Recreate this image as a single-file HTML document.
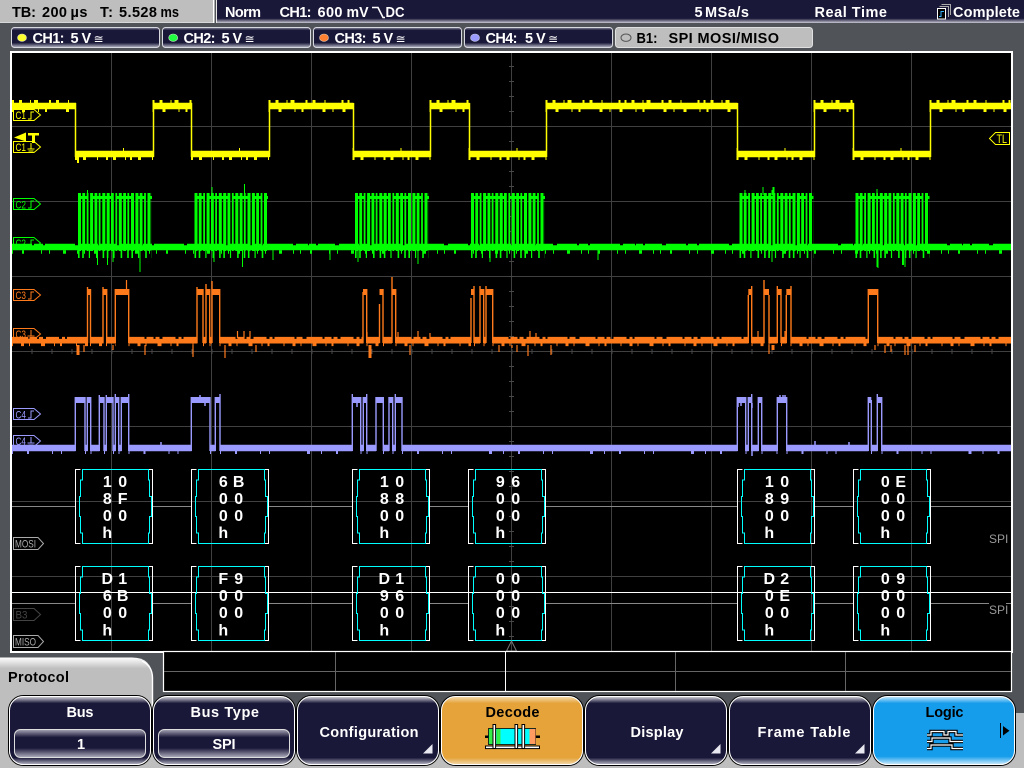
<!DOCTYPE html>
<html lang="en">
<head>
<meta charset="utf-8">
<title>Oscilloscope SPI Decode</title>
<style>
html,body{margin:0;padding:0;background:#505458;width:1024px;height:768px;overflow:hidden}
svg{display:block}
text{font-family:"Liberation Sans",sans-serif;font-weight:bold;font-size:14.5px}
.l{font-weight:normal;font-size:11px}
.d{font-size:16px;fill:#fff;text-anchor:middle}
.w{fill:#fff}
.k{fill:#000}
.s{font-family:"DejaVu Sans",sans-serif;font-weight:normal;font-size:12px;fill:#fff}
</style>
</head>
<body>
<svg width="1024" height="768" viewBox="0 0 1024 768" xmlns="http://www.w3.org/2000/svg">
<defs>
<linearGradient id="bar" x1="0" y1="0" x2="0" y2="1"><stop offset="0" stop-color="#1a1838"/><stop offset=".8" stop-color="#1a1838"/><stop offset="1" stop-color="#c8c8d4"/></linearGradient>
<linearGradient id="pill" x1="0" y1="0" x2="0" y2="1"><stop offset="0" stop-color="#8c8ca0"/><stop offset=".14" stop-color="#1a1838"/><stop offset=".76" stop-color="#1a1838"/><stop offset="1" stop-color="#b8b8c8"/></linearGradient>
<linearGradient id="btn" x1="0" y1="0" x2="0" y2="1"><stop offset="0" stop-color="#d8d8e0"/><stop offset=".1" stop-color="#1a1838"/><stop offset=".9" stop-color="#1a1838"/><stop offset="1" stop-color="#b8b8c8"/></linearGradient>
<linearGradient id="inner" x1="0" y1="0" x2="0" y2="1"><stop offset="0" stop-color="#a8a8b8"/><stop offset=".28" stop-color="#1a1838"/><stop offset=".66" stop-color="#1a1838"/><stop offset="1" stop-color="#b0b0c0"/></linearGradient>
<linearGradient id="org" x1="0" y1="0" x2="0" y2="1"><stop offset="0" stop-color="#f4dcb0"/><stop offset=".1" stop-color="#e5a33a"/><stop offset=".9" stop-color="#e5a33a"/><stop offset="1" stop-color="#f2d8a8"/></linearGradient>
<linearGradient id="blu" x1="0" y1="0" x2="0" y2="1"><stop offset="0" stop-color="#c8e8fb"/><stop offset=".1" stop-color="#159ceb"/><stop offset=".88" stop-color="#159ceb"/><stop offset="1" stop-color="#d0ecfb"/></linearGradient>
<linearGradient id="tab" x1="0" y1="0" x2="0" y2="1"><stop offset="0" stop-color="#fff"/><stop offset=".1" stop-color="#bebebe"/><stop offset="1" stop-color="#bebebe"/></linearGradient>
<g id="box">
<path d="M5.5 .5H.5V74.5H5.5M72.5 .5H77.5V74.5H72.5" fill="none" stroke="#fff" stroke-width="1"/>
<path d="M7.5 .5H73.5V11H74.5V27.5H76.5V47.5H74.5V64H73.5V74.5H7.5V64H5.5V47.5H4.5V27.5H5.5V11H7.5Z" fill="none" stroke="#00ffff" stroke-width="1"/>
</g>
<path id="yh" d="M12 106H76M152.5 106H192M268.5 106H353.5M429.5 106H469.5M545.5 106H737.5M813.5 106H853.5M929.5 106H1011"/>
<path id="yl" d="M75 154H153.5M191 154H269.5M352.5 154H430.5M468.5 154H546.5M736.5 154H814.5M852.5 154H930.5"/>
<path id="gb" d="M78 222H152M194.5 222H268M355 222H429M471 222H545M739.5 222H813.5M855.5 222H929.5"/>
<path id="ob" d="M12 341H88M90 341H103.5M106 341H115.5M128.5 341H197.5M203 341H206M209.5 341H212M219.5 341H363.5M366.5 341H379.5M383 341H392M395.5 341H471M474 341H480M483.5 341H486M492.5 341H748.5M751.5 341H764.5M768.5 341H777.5M781 341H786.5M790.5 341H868.5M877.5 341H1011"/>
<path id="bb" d="M12 448H75.5M85 448H87.5M90.5 448H99.5M104 448H106.5M113 448H115.5M118.5 448H121.5M128.5 448H191.5M210 448H215.5M220 448H352.5M360.5 448H363.5M366.5 448H376M383 448H389M392.5 448H395.5M402 448H737.5M745.5 448H748.5M751.5 448H758.5M761.5 448H777.5M786.5 448H868.5M871 448H877.5M881.5 448H1011"/>
</defs>

<rect width="1024" height="768" fill="#505458"/>

<!-- top bar -->
<rect x="0" y="0" width="213" height="22" fill="#bebebe"/>
<rect x="0" y="22" width="213" height="1" fill="#d8d8d8"/>
<rect x="213" y="0" width="1.5" height="23" fill="#fff"/>
<rect x="217" y="0" width="807" height="23" fill="url(#bar)"/>
<rect x="216" y="0" width="1" height="23" fill="#e8e8e8"/>
<text x="12" y="17" class="k" textLength="24">TB:</text><text x="42" y="17" class="k" textLength="25">200</text><text x="70.5" y="17" class="k" textLength="17">µs</text>
<text x="100" y="17" class="k" textLength="13">T:</text><text x="119" y="17" class="k" textLength="38">5.528</text><text x="160.5" y="17" class="k" textLength="18.5" lengthAdjust="spacingAndGlyphs">ms</text>
<text x="225" y="17" class="w" textLength="36">Norm</text>
<text x="279.5" y="17" class="w" textLength="32">CH1:</text>
<text x="317.5" y="17" class="w" textLength="25">600</text>
<text x="346.5" y="17" class="w" textLength="22" lengthAdjust="spacingAndGlyphs">mV</text>
<path d="M372 7.5H378L383 17.5H385" fill="none" stroke="#fff" stroke-width="1.6"/>
<text x="385.5" y="17" class="w" textLength="19" lengthAdjust="spacingAndGlyphs">DC</text>
<text x="694.5" y="17" class="w">5</text>
<text x="705" y="17" class="w" textLength="44">MSa/s</text>
<text x="814.5" y="17" class="w" textLength="72.5">Real Time</text>
<text x="953" y="17" class="w" textLength="67">Complete</text>
<path d="M941.5 4.5H950.5V15M939.5 6.5H948.5V17" fill="none" stroke="#aaa" stroke-width="1"/>
<rect x="937.5" y="8.5" width="8" height="10.5" fill="#000" stroke="#fff"/>
<path d="M939 16.5H941V11.5H944" fill="none" stroke="#35b0ff" stroke-width="1"/>

<!-- channel pills -->
<g stroke="#d8d8e0" stroke-width="1" fill="url(#pill)">
<rect x="11.5" y="27.5" width="148" height="20" rx="3"/>
<rect x="162.5" y="27.5" width="148" height="20" rx="3"/>
<rect x="313.5" y="27.5" width="148" height="20" rx="3"/>
<rect x="464.5" y="27.5" width="148" height="20" rx="3"/>
</g>
<rect x="615.5" y="27.5" width="197" height="20" rx="3" fill="#bebebe" stroke="#e0e0e0"/>
<ellipse cx="22" cy="37.7" rx="4.5" ry="3.7" fill="#ffff30" stroke="#d8d8c0" stroke-width=".6"/>
<ellipse cx="173.2" cy="37.7" rx="4.5" ry="3.7" fill="#20ff40" stroke="#c8e0c8" stroke-width=".6"/>
<ellipse cx="324" cy="37.7" rx="4.5" ry="3.7" fill="#ff8030" stroke="#e0c8b8" stroke-width=".6"/>
<ellipse cx="475" cy="37.7" rx="4.5" ry="3.7" fill="#9a9aff" stroke="#c8c8e0" stroke-width=".6"/>
<ellipse cx="626" cy="37.7" rx="5" ry="3.7" fill="#bebebe" stroke="#555" stroke-width="1"/>
<text x="32.5" y="43" class="w" textLength="32">CH1:</text><text x="70.5" y="43" class="w">5</text><text x="81.5" y="43" class="w">V</text>
<text x="183.5" y="43" class="w" textLength="32">CH2:</text><text x="221.5" y="43" class="w">5</text><text x="232.5" y="43" class="w">V</text>
<text x="334.5" y="43" class="w" textLength="32">CH3:</text><text x="372.5" y="43" class="w">5</text><text x="383.5" y="43" class="w">V</text>
<text x="485.5" y="43" class="w" textLength="32">CH4:</text><text x="525" y="43" class="w">5</text><text x="536" y="43" class="w">V</text>
<text x="93.5" y="43" class="s">≅</text>
<text x="244.5" y="43" class="s">≅</text>
<text x="395.5" y="43" class="s">≅</text>
<text x="548" y="43" class="s">≅</text>
<text x="636.5" y="43" class="k" textLength="21" lengthAdjust="spacingAndGlyphs">B1:</text>
<text x="668.5" y="43" class="k" textLength="110.5">SPI MOSI/MISO</text>

<!-- scope screen -->
<rect x="11" y="52" width="1001" height="600" fill="#000" stroke="#fff" stroke-width="2"/>
<g stroke="#404040" stroke-width="1" fill="none">
<path d="M111.5 53V651M211.5 53V651M311.5 53V651M411.5 53V651M511.5 53V651M611.5 53V651M711.5 53V651M811.5 53V651M911.5 53V651"/>
<path d="M12 126.5H1011M12 201.5H1011M12 276.5H1011M12 351.5H1011M12 426.5H1011M12 501.5H1011M12 576.5H1011"/>
<line x1="31.5" y1="351.5" x2="1011" y2="351.5" stroke-width="5" stroke-dasharray="1 19" stroke="#484848"/>
<line x1="511.5" y1="66" x2="511.5" y2="651" stroke-width="5" stroke-dasharray="1 14" stroke="#484848"/>
</g>

<!-- channel tags -->
<g fill="none" stroke-width="1">
<g stroke="#ffff00">
<path d="M13.5 109.5H34L40.5 115L34 120.5H13.5Z"/><path d="M28 119H31V112H34"/>
<path d="M13.5 141.5H34L40.5 147L34 152.5H13.5Z"/><path d="M31 143V149M27.5 149H34.5M28.5 151H33.5"/>
</g>
<g stroke="#00ff00">
<path d="M13.5 198.5H34L40.5 204L34 209.5H13.5Z"/><path d="M28 208H31V201H34"/>
<path d="M13.5 237.5H34L40.5 243L34 248.5H13.5Z"/><path d="M28 247H31V240H34"/>
</g>
<g stroke="#ff7a1a">
<path d="M13.5 289.5H34L40.5 295L34 300.5H13.5Z"/><path d="M28 299H31V292H34"/>
<path d="M13.5 328.5H34L40.5 334L34 339.5H13.5Z"/><path d="M31 330V336M27.5 336H34.5M28.5 338H33.5"/>
</g>
<g stroke="#9a9aff">
<path d="M13.5 408.5H34L40.5 414L34 419.5H13.5Z"/><path d="M28 418H31V411H34"/>
<path d="M13.5 435.5H34L40.5 441L34 446.5H13.5Z"/><path d="M31 437V443M27.5 443H34.5M28.5 445H33.5"/>
</g>
<path d="M13.5 537.5H38L43.5 543.5L38 549.5H13.5Z" stroke="#aaa"/>
<path d="M13.5 608.5H34L40.5 614.5L34 620.5H13.5Z" stroke="#444"/>
<path d="M13.5 635.5H38L43.5 641.5L38 647.5H13.5Z" stroke="#aaa"/>
<path d="M989.5 138.5L995.5 132.5H1009.5V144.5H995.5Z" stroke="#ffff00"/>
</g>
<text class="l" x="15.5" y="119" fill="#ffff00" textLength="10.5" lengthAdjust="spacingAndGlyphs">C1</text>
<text class="l" x="15.5" y="151" fill="#ffff00" textLength="10.5" lengthAdjust="spacingAndGlyphs">C1</text>
<text class="l" x="15.5" y="208.5" fill="#00ff00" textLength="10.5" lengthAdjust="spacingAndGlyphs">C2</text>
<text class="l" x="15.5" y="247" fill="#00ff00" textLength="10.5" lengthAdjust="spacingAndGlyphs">C2</text>
<text class="l" x="15.5" y="299" fill="#ff7a1a" textLength="10.5" lengthAdjust="spacingAndGlyphs">C3</text>
<text class="l" x="15.5" y="338" fill="#ff7a1a" textLength="10.5" lengthAdjust="spacingAndGlyphs">C3</text>
<text class="l" x="15.5" y="418.5" fill="#9a9aff" textLength="10.5" lengthAdjust="spacingAndGlyphs">C4</text>
<text class="l" x="15.5" y="445" fill="#9a9aff" textLength="10.5" lengthAdjust="spacingAndGlyphs">C4</text>
<text class="l" x="15" y="547.5" fill="#aaa" textLength="21" lengthAdjust="spacingAndGlyphs">MOSI</text>
<text class="l" x="15.5" y="618.5" fill="#444" textLength="12" lengthAdjust="spacingAndGlyphs">B3</text>
<text class="l" x="15" y="645.5" fill="#aaa" textLength="21" lengthAdjust="spacingAndGlyphs">MISO</text>
<text class="l" x="996.5" y="143" fill="#ffff00" style="font-size:12px" textLength="10.5" lengthAdjust="spacingAndGlyphs">TL</text>
<text class="l" x="989" y="543" fill="#999" style="font-size:12px">SPI</text>
<text class="l" x="989" y="614" fill="#999" style="font-size:12px">SPI</text>

<!-- yellow -->
<g fill="none" stroke="#ffff00">
<use href="#yh" stroke-width="6.6"/><use href="#yl" stroke-width="6.6"/>
<path stroke-width="1.5" d="M75.5 103V157M153.5 103V157M191.5 103V157M269.5 103V157M353.5 103V157M430.5 103V157M469.5 103V157M546.5 103V157M737.5 103V157M814.5 103V157M853.5 103V157M930.5 103V157"/>
<use href="#yh" transform="translate(0,-4.5)" stroke-width="3" stroke-dasharray="2 5 3 8 1 3 4 11 2 5 3 9 1 16 2 4"/>
<use href="#yh" transform="translate(0,4.5)" stroke-width="3" stroke-dasharray="1 9 3 13 1 6 2 19 3 7"/>
<use href="#yl" transform="translate(0,4.5)" stroke-width="3" stroke-dasharray="2 6 3 11 1 8 2 5 3 9 1 4"/>
<use href="#yl" transform="translate(0,-4.5)" stroke-width="3" stroke-dasharray="1 47 1 61 2 39"/>
<path stroke-width="2" d="M78 157V163"/>
</g>

<!-- green -->
<g fill="none" stroke="#00ff00">
<line x1="12" y1="247.7" x2="1011" y2="247.7" stroke-width="5"/>
<line x1="12" y1="245" x2="1011" y2="245" stroke-width="2.5" stroke-dasharray="20 2 9 2 30 3 12 1 7 2 17 4"/>
<line x1="12" y1="252" x2="1011" y2="252" stroke-width="3.5" stroke-dasharray="1 9 2 17 1 7 1 13 3 11 1 6"/>
<use href="#gb" stroke-width="58" stroke-dasharray="3 1.3 2.8 1.6 1.8 1.6 3 1.4 2.8 1.4 1.8 1.8 3 1.4"/>
<use href="#gb" transform="translate(0,-24.5)" stroke-width="3" stroke-dasharray="9 4 20 6 14 5"/>
<use href="#gb" transform="translate(0,32)" stroke-width="8" stroke-dasharray="1.6 2.6 1.6 5 1.2 6 1.6 5"/>
<path stroke-width="1" d="M87.5 190V200M212 187V195M244.5 184V193M745 190V195M763 187V195M877 189V195M97.5 250V265M107.5 250V265M140 250V272M113 250V262M214 250V262M242.5 250V267M273 250V260M330 250V260M358 250V262M418 250V264M490 250V262M598 250V260M772 250V262M772 190V195M905 250V267M877 250V267M878 250V268"/>
<path stroke-width="2" d="M773.5 187V195M903 250V265"/>
</g>

<!-- orange -->
<g fill="none" stroke="#ff7a1a">
<use href="#ob" stroke-width="4.6" transform="translate(0,.2)"/>
<use href="#ob" transform="translate(0,-2.8)" stroke-width="2.6" stroke-dasharray="16 2 7 2 4 3 13 3 3 2 20 2 6 4"/>
<use href="#ob" transform="translate(0,3.6)" stroke-width="3" stroke-dasharray="1 8 3 5 1 11 4 9 1 5 2 14"/>
<path stroke-width="6" d="M87.5 292H90.5M103 292H106.7M115.3 292H128.7M197 292H203M206 292H209.7M212 292H219.7M363 292H366.7M379.5 292H383M392 292H395.7M471 292H474M480 292H483.7M486 292H492.7M748.3 292H751.7M764 292H769M777.3 292H781M786.3 292H791M868.3 292H877.7"/>
<path stroke-width="1.4" d="M87.5 287V343M90.5 289V343M103 287V343M106.7 289V343M115.3 289V343M128.7 289V343M197 287V343M203 289V343M206 284V343M209.7 289V343M212 281V343M219.7 289V343M363 292V343M366.7 289V343M379.5 304V343M383 289V343M392 277V343M395.7 289V343M471 298V343M474 286V343M480 286V343M483.7 289V343M486 286V343M492.7 289V343M748.3 295V343M751.7 286V343M764 280V343M769 295V343M777.3 286V343M781 289V343M786.3 295V343M791 286V343M868.3 289V343M877.7 289V343"/>
<path stroke-width="1.2" d="M126.5 280V290M237.5 331V338M244 331V338M250 331V338M225 345V358M84 345V352M145 345V355M113 345V350M193 345V357M256 345V352M769 345V354M410 345V355M367 332V339M398 332V339M370 345V356M418 331V339M430 333V339M499 345V352M512 345V348M517 345V352M528 345V356M530 331V338M536 333V339M551 345V355M758 331V339M785 331V339M875 345V350M915 345V352M885 345V353M891 345V352M905 345V355M908 345V355"/>
<path stroke-width="3" d="M78 345V355M370 345V358M773 345V350"/>
</g>

<!-- blue -->
<g fill="none" stroke="#9a9aff">
<use href="#bb" stroke-width="6.4"/>
<use href="#bb" transform="translate(0,4.5)" stroke-width="3" stroke-dasharray="1 14 2 23 1 8 1 37 3 11"/>
<path stroke-width="6" d="M75.3 400H85M87.3 400H90.7M99.3 400H104M106.3 400H113M115.3 400H118.7M121.3 400H128.7M191.3 400H210M215.3 400H220M352.3 400H360.7M363.3 400H366.7M376 400H383.3M389 400H392.7M395.3 400H402M737.3 400H745.7M748.3 400H751.7M758.3 400H761.7M777.3 400H786.7M868.3 400H871.3M877.3 400H881.7"/>
<path stroke-width="1.4" d="M75.3 397V451M85 397V451M87.3 397V451M90.7 397V451M99.3 395V451M104 397V451M106.3 395V451M113 397V451M115.3 394V451M118.7 397V451M121.3 397V451M128.7 394V451M191.3 397V451M210 397V451M215.3 397V451M220 394V451M352.3 394V451M360.7 397V451M363.3 397V451M366.7 394V451M376 397V451M383.3 397V451M389 397V451M392.7 397V451M395.3 394V451M402 397V451M737.3 397V451M745.7 397V451M748.3 397V451M751.7 394V451M758.3 397V451M761.7 397V451M777.3 397V451M786.7 397V451M868.3 397V451M871.3 400V451M877.3 394V451M881.7 397V451"/>
<path stroke-width="1.5" d="M200 395V397M205 403V406M357 403V407M785 395V397M780 395V397M783 395V397M738 403V407M741 403V406M752 451V456M752 403V408M161 442V445M815 441V445M849 442V445"/>
</g>

<!-- bus lines -->
<g stroke="#888" stroke-width="1" fill="none">
<path d="M12 506.5H75M153 506.5H191M269 506.5H352M430 506.5H468M546 506.5H737M815 506.5H853M931 506.5H1011"/>
<path d="M12 603.5H75M153 603.5H191M269 603.5H352M430 603.5H468M546 603.5H737M815 603.5H853M931 603.5H989M1006 603.5H1011"/>
</g>
<line x1="12" y1="592.5" x2="1011" y2="592.5" stroke="#fff" stroke-width="1"/>

<!-- decode boxes -->
<use href="#box" x="75" y="469"/><use href="#box" x="191" y="469"/><use href="#box" x="352" y="469"/><use href="#box" x="468" y="469"/><use href="#box" x="737" y="469"/><use href="#box" x="853" y="469"/>
<use href="#box" x="75" y="566"/><use href="#box" x="191" y="566"/><use href="#box" x="352" y="566"/><use href="#box" x="468" y="566"/><use href="#box" x="737" y="566"/><use href="#box" x="853" y="566"/>

<g transform="translate(75,0)"><text class="d" x="32.3 40 47.7" y="487">1 0</text><text class="d" x="32.3 40 47.7" y="504">8 F</text><text class="d" x="32.3 40 47.7" y="521">0 0</text><text class="d" x="32.3" y="538">h</text>
<text class="d" x="32.3 40 47.7" y="584">D 1</text><text class="d" x="32.3 40 47.7" y="601">6 B</text><text class="d" x="32.3 40 47.7" y="618">0 0</text><text class="d" x="32.3" y="635.5">h</text></g>
<g transform="translate(191,0)"><text class="d" x="32.3 40 47.7" y="487">6 B</text><text class="d" x="32.3 40 47.7" y="504">0 0</text><text class="d" x="32.3 40 47.7" y="521">0 0</text><text class="d" x="32.3" y="538">h</text>
<text class="d" x="32.3 40 47.7" y="584">F 9</text><text class="d" x="32.3 40 47.7" y="601">0 0</text><text class="d" x="32.3 40 47.7" y="618">0 0</text><text class="d" x="32.3" y="635.5">h</text></g>
<g transform="translate(352,0)"><text class="d" x="32.3 40 47.7" y="487">1 0</text><text class="d" x="32.3 40 47.7" y="504">8 8</text><text class="d" x="32.3 40 47.7" y="521">0 0</text><text class="d" x="32.3" y="538">h</text>
<text class="d" x="32.3 40 47.7" y="584">D 1</text><text class="d" x="32.3 40 47.7" y="601">9 6</text><text class="d" x="32.3 40 47.7" y="618">0 0</text><text class="d" x="32.3" y="635.5">h</text></g>
<g transform="translate(468,0)"><text class="d" x="32.3 40 47.7" y="487">9 6</text><text class="d" x="32.3 40 47.7" y="504">0 0</text><text class="d" x="32.3 40 47.7" y="521">0 0</text><text class="d" x="32.3" y="538">h</text>
<text class="d" x="32.3 40 47.7" y="584">0 0</text><text class="d" x="32.3 40 47.7" y="601">0 0</text><text class="d" x="32.3 40 47.7" y="618">0 0</text><text class="d" x="32.3" y="635.5">h</text></g>
<g transform="translate(737,0)"><text class="d" x="32.3 40 47.7" y="487">1 0</text><text class="d" x="32.3 40 47.7" y="504">8 9</text><text class="d" x="32.3 40 47.7" y="521">0 0</text><text class="d" x="32.3" y="538">h</text>
<text class="d" x="32.3 40 47.7" y="584">D 2</text><text class="d" x="32.3 40 47.7" y="601">0 E</text><text class="d" x="32.3 40 47.7" y="618">0 0</text><text class="d" x="32.3" y="635.5">h</text></g>
<g transform="translate(853,0)"><text class="d" x="32.3 40 47.7" y="487">0 E</text><text class="d" x="32.3 40 47.7" y="504">0 0</text><text class="d" x="32.3 40 47.7" y="521">0 0</text><text class="d" x="32.3" y="538">h</text>
<text class="d" x="32.3 40 47.7" y="584">0 9</text><text class="d" x="32.3 40 47.7" y="601">0 0</text><text class="d" x="32.3 40 47.7" y="618">0 0</text><text class="d" x="32.3" y="635.5">h</text></g>

<!-- trigger marker -->
<path d="M14 137.5L26 132.5V141.5Z" fill="#ffff00"/>
<path d="M28 133H39V135.5H35V143H32V135.5H28Z" fill="#ffff00"/>
<path d="M506.5 651L511.5 641L516.5 651Z" fill="none" stroke="#777"/>

<!-- timeline -->
<rect x="163.5" y="651.5" width="848" height="40" fill="#000" stroke="#fff" stroke-width="1.2"/>
<path d="M164 671.5H1011M335.5 652V691M675.5 652V691M845.5 652V691" stroke="#666" stroke-width="1" fill="none"/>
<path d="M505.5 652V691" stroke="#fff" stroke-width="1" fill="none"/>

<!-- lower area -->
<rect x="0" y="713" width="1024" height="55" fill="#bebebe"/>
<path d="M0 657.5H132Q152.5 657.5 152.5 678V768H0Z" fill="url(#tab)"/>
<path d="M142 661Q152.5 666 152.5 678V720" fill="none" stroke="#fff" stroke-width="1.4"/>
<text x="8" y="682" class="k" textLength="61">Protocol</text>

<!-- soft buttons -->
<g stroke="#000" fill="none">
<rect x="8.5" y="695.5" width="143" height="70" rx="15"/><rect x="152.5" y="695.5" width="143" height="70" rx="15"/><rect x="296.5" y="695.5" width="143" height="70" rx="15"/><rect x="440.5" y="695.5" width="143" height="70" rx="15"/><rect x="584.5" y="695.5" width="143" height="70" rx="15"/><rect x="728.5" y="695.5" width="143" height="70" rx="15"/><rect x="872.5" y="695.5" width="143" height="70" rx="15"/>
</g>
<g stroke="#fff" stroke-width="1">
<rect x="9.5" y="696.5" width="141" height="68" rx="14" fill="url(#btn)"/>
<rect x="153.5" y="696.5" width="141" height="68" rx="14" fill="url(#btn)"/>
<rect x="297.5" y="696.5" width="141" height="68" rx="14" fill="url(#btn)"/>
<rect x="441.5" y="696.5" width="141" height="68" rx="14" fill="url(#org)"/>
<rect x="585.5" y="696.5" width="141" height="68" rx="14" fill="url(#btn)"/>
<rect x="729.5" y="696.5" width="141" height="68" rx="14" fill="url(#btn)"/>
<rect x="873.5" y="696.5" width="141" height="68" rx="14" fill="url(#blu)"/>
<rect x="14.5" y="729.5" width="131" height="28" rx="6" fill="url(#inner)" stroke="#ddd"/>
<rect x="158.5" y="729.5" width="131" height="28" rx="6" fill="url(#inner)" stroke="#ddd"/>
</g>
<text x="66.5" y="717" class="w" textLength="27">Bus</text>
<text x="77" y="749" class="w">1</text>
<text x="190.5" y="717" class="w" textLength="68.5">Bus Type</text>
<text x="212.5" y="749" class="w" textLength="23">SPI</text>
<text x="319.5" y="737" class="w" textLength="99">Configuration</text>
<text x="485.5" y="717" class="k" textLength="54">Decode</text>
<text x="630.5" y="737" class="w" textLength="53">Display</text>
<text x="757.5" y="737" class="w" textLength="93">Frame Table</text>
<text x="925.5" y="717" class="k" textLength="38">Logic</text>
<path d="M432.5 744V753.5H423Z M711 753.5H720.5V744Z M855 753.5H864.5V744Z" fill="#e8e8f0"/>

<!-- decode icon -->
<rect x="485" y="735.5" width="3.5" height="2.5" fill="#000"/>
<rect x="535.5" y="735.5" width="4.5" height="2.5" fill="#000"/>
<rect x="488.5" y="728.5" width="47" height="16" fill="#00ffff" stroke="#000" stroke-width=".8"/>
<rect x="489" y="729" width="4" height="15" fill="#33ee44"/>
<rect x="496.5" y="729" width="4" height="15" fill="#33ee44"/>
<rect x="529.5" y="729" width="6" height="15" fill="#ff9a60"/>
<g fill="#fff" stroke="#000" stroke-width="1">
<rect x="485.5" y="746" width="54" height="2.6"/>
<rect x="493" y="724.5" width="2.6" height="24"/>
<rect x="515" y="724.5" width="2.6" height="24"/>
<rect x="522" y="724.5" width="2.6" height="24"/>
</g>

<!-- logic icon -->
<g fill="none">
<path d="M927 735H931V731.5H944V735H948V731.5H956V735H963M927 741.5H932V738H950V741.5H963M927 748.5H931V745H952V748.5H963" stroke="#000" stroke-width="3.4"/>
<path d="M927 735H931V731.5H944V735H948V731.5H956V735H963M927 741.5H932V738H950V741.5H963M927 748.5H931V745H952V748.5H963" stroke="#fff" stroke-width="1.2"/>
</g>
<rect x="1000" y="723" width="1" height="15" fill="#000"/>
<path d="M1003 726V735.5L1009.5 730.7Z" fill="#000"/>
</svg>
</body>
</html>
